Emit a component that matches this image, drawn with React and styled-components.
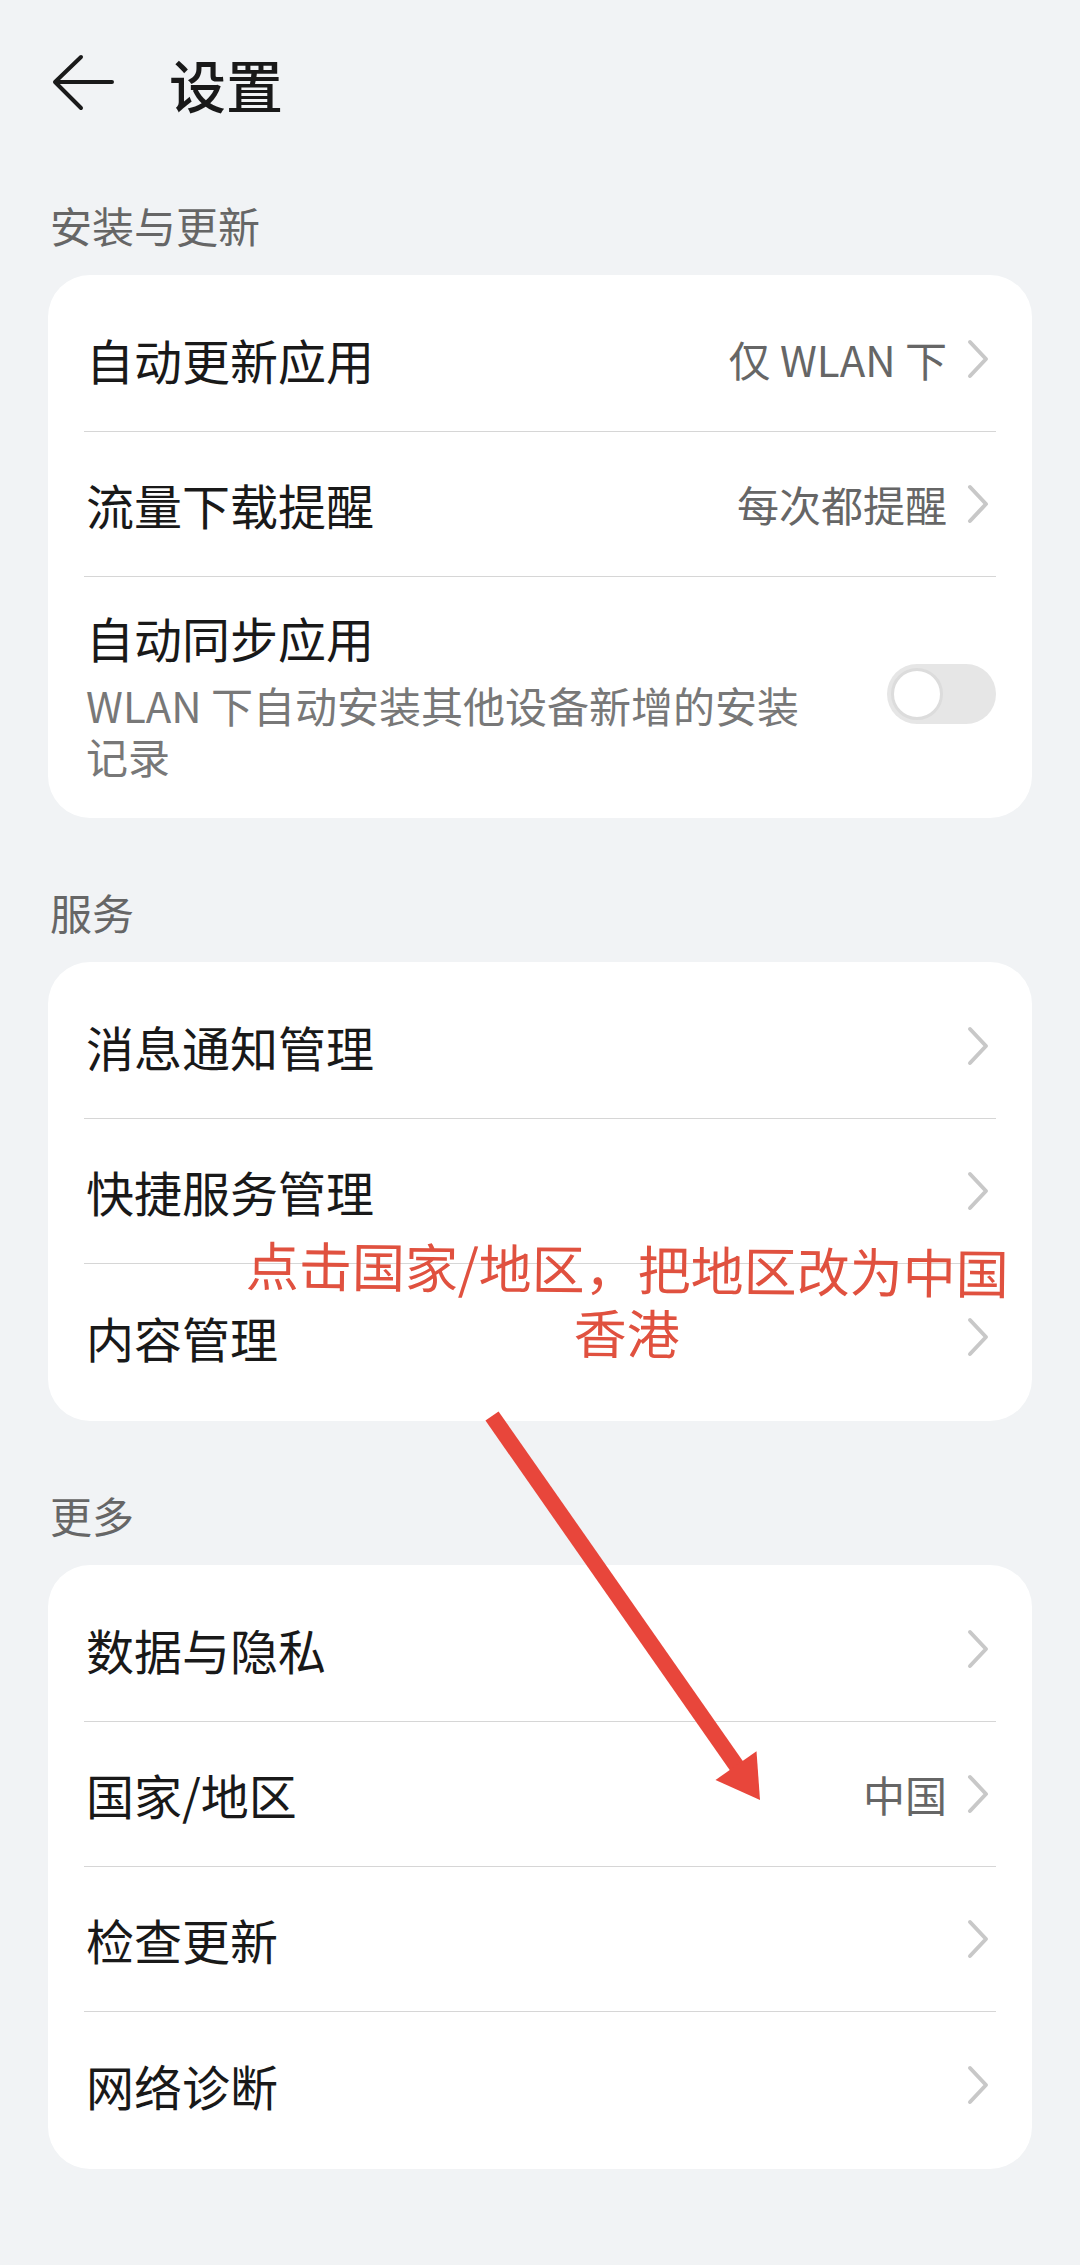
import React from "react";
import styled, { createGlobalStyle } from "styled-components";

const GlobalStyle = createGlobalStyle`
  * { box-sizing: border-box; }
  body {
    margin: 0;
    background: #f1f3f5;
    font-family: "Noto Sans CJK SC", "Noto Sans", sans-serif;
  }
`;

const Page = styled.div`
  position: relative;
  width: 1080px;
  min-height: 2265px;
  background: #f1f3f5;
  padding: 0 48px;
`;

const TopBar = styled.div`
  height: 166px;
  display: flex;
  align-items: center;
`;

const BackIcon = styled.svg`
  width: 64px;
  height: 58px;
  margin-left: 3px;
  flex-shrink: 0;
`;

const Title = styled.h1`
  margin: 0 0 0 54px;
  font-size: 57px;
  line-height: 1;
  font-weight: 500;
  color: #191919;
`;

const Sections = styled.div`
  display: flex;
  flex-direction: column;
  gap: 65px;
  padding-top: 30px;
`;

const SectionLabel = styled.div`
  font-size: 42px;
  line-height: 58px;
  color: #666;
  padding-left: 2px;
  margin-bottom: 21px;
`;

const Card = styled.div`
  background: #fff;
  border-radius: 42px;
  padding: 12px 36px;
`;

const Row = styled.div`
  display: flex;
  align-items: center;
  min-height: 145px;
  padding: ${(p) => (p.$tall ? "30px 0 25px" : "0")};
  border-bottom: 1px solid #d6d6d6;

  &:last-child {
    border-bottom: none;
  }
`;

const RowText = styled.div`
  flex: 1;
  display: flex;
  flex-direction: column;
  min-width: 0;
`;

const RowTitle = styled.div`
  font-size: 48px;
  line-height: 60px;
  color: #191919;
  padding-left: 2px;
`;

const RowSub = styled.div`
  width: 740px;
  margin-top: 12px;
  font-size: 42px;
  line-height: 51px;
  color: #787878;
  padding-left: 2px;
`;

const Value = styled.span`
  font-size: 42px;
  line-height: 58px;
  color: #666;
`;

const Chevron = styled.svg`
  width: 24px;
  height: 40px;
  margin: 0 6px 0 19px;
  flex-shrink: 0;
`;

const Track = styled.div`
  width: 109px;
  height: 60px;
  border-radius: 30px;
  background: #e6e6e6;
  display: flex;
  align-items: center;
  padding-left: 4px;
  flex-shrink: 0;
`;

const Knob = styled.div`
  width: 52px;
  height: 52px;
  border-radius: 50%;
  background: #fff;
  border: 3px solid #dcdcdc;
`;

const Note = styled.div`
  position: absolute;
  left: 227px;
  top: 1235px;
  width: 800px;
  text-align: center;
  font-size: 53px;
  line-height: 64px;
  color: #e0513f;
  transform: rotate(0.6deg);
  pointer-events: none;
`;

const Pointer = styled.svg`
  position: absolute;
  left: 470px;
  top: 1395px;
  width: 310px;
  height: 420px;
  pointer-events: none;
`;

function ChevronIcon() {
  return (
    <Chevron viewBox="0 0 24 40">
      <polyline
        points="4,3 20,20 4,37"
        fill="none"
        stroke="#c8c8c8"
        strokeWidth="4"
        strokeLinecap="round"
        strokeLinejoin="round"
      />
    </Chevron>
  );
}

function LinkRow({ title, value }) {
  return (
    <Row>
      <RowText>
        <RowTitle>{title}</RowTitle>
      </RowText>
      {value && <Value>{value}</Value>}
      <ChevronIcon />
    </Row>
  );
}

const sections = [
  {
    label: "安装与更新",
    rows: [
      { title: "自动更新应用", value: "仅 WLAN 下" },
      { title: "流量下载提醒", value: "每次都提醒" },
      {
        title: "自动同步应用",
        sub: "WLAN 下自动安装其他设备新增的安装记录",
        toggle: true,
      },
    ],
  },
  {
    label: "服务",
    rows: [
      { title: "消息通知管理" },
      { title: "快捷服务管理" },
      { title: "内容管理" },
    ],
  },
  {
    label: "更多",
    rows: [
      { title: "数据与隐私" },
      { title: "国家/地区", value: "中国" },
      { title: "检查更新" },
      { title: "网络诊断" },
    ],
  },
];

export default function App() {
  return (
    <>
      <GlobalStyle />
      <Page>
        <TopBar>
          <BackIcon viewBox="0 0 64 58">
            <path
              d="M30 3 L4 28 L30 54 M5 28 L61 28"
              fill="none"
              stroke="#1a1a1a"
              strokeWidth="4"
              strokeLinecap="round"
              strokeLinejoin="round"
            />
          </BackIcon>
          <Title>设置</Title>
        </TopBar>

        <Sections>
          {sections.map((s) => (
            <div key={s.label}>
              <SectionLabel>{s.label}</SectionLabel>
              <Card>
                {s.rows.map((r) =>
                  r.toggle ? (
                    <Row key={r.title} $tall>
                      <RowText>
                        <RowTitle>{r.title}</RowTitle>
                        <RowSub>{r.sub}</RowSub>
                      </RowText>
                      <Track>
                        <Knob />
                      </Track>
                    </Row>
                  ) : (
                    <LinkRow key={r.title} title={r.title} value={r.value} />
                  )
                )}
              </Card>
            </div>
          ))}
        </Sections>

        <Note>
          点击国家/地区，把地区改为中国
          <br />
          香港
        </Note>

        <Pointer viewBox="0 0 310 420">
          <line
            x1="22"
            y1="21"
            x2="268"
            y2="373"
            stroke="#e8463b"
            strokeWidth="16"
          />
          <polygon points="290,405 245.5,384.9 286.5,356.3" fill="#e8463b" />
        </Pointer>
      </Page>
    </>
  );
}
